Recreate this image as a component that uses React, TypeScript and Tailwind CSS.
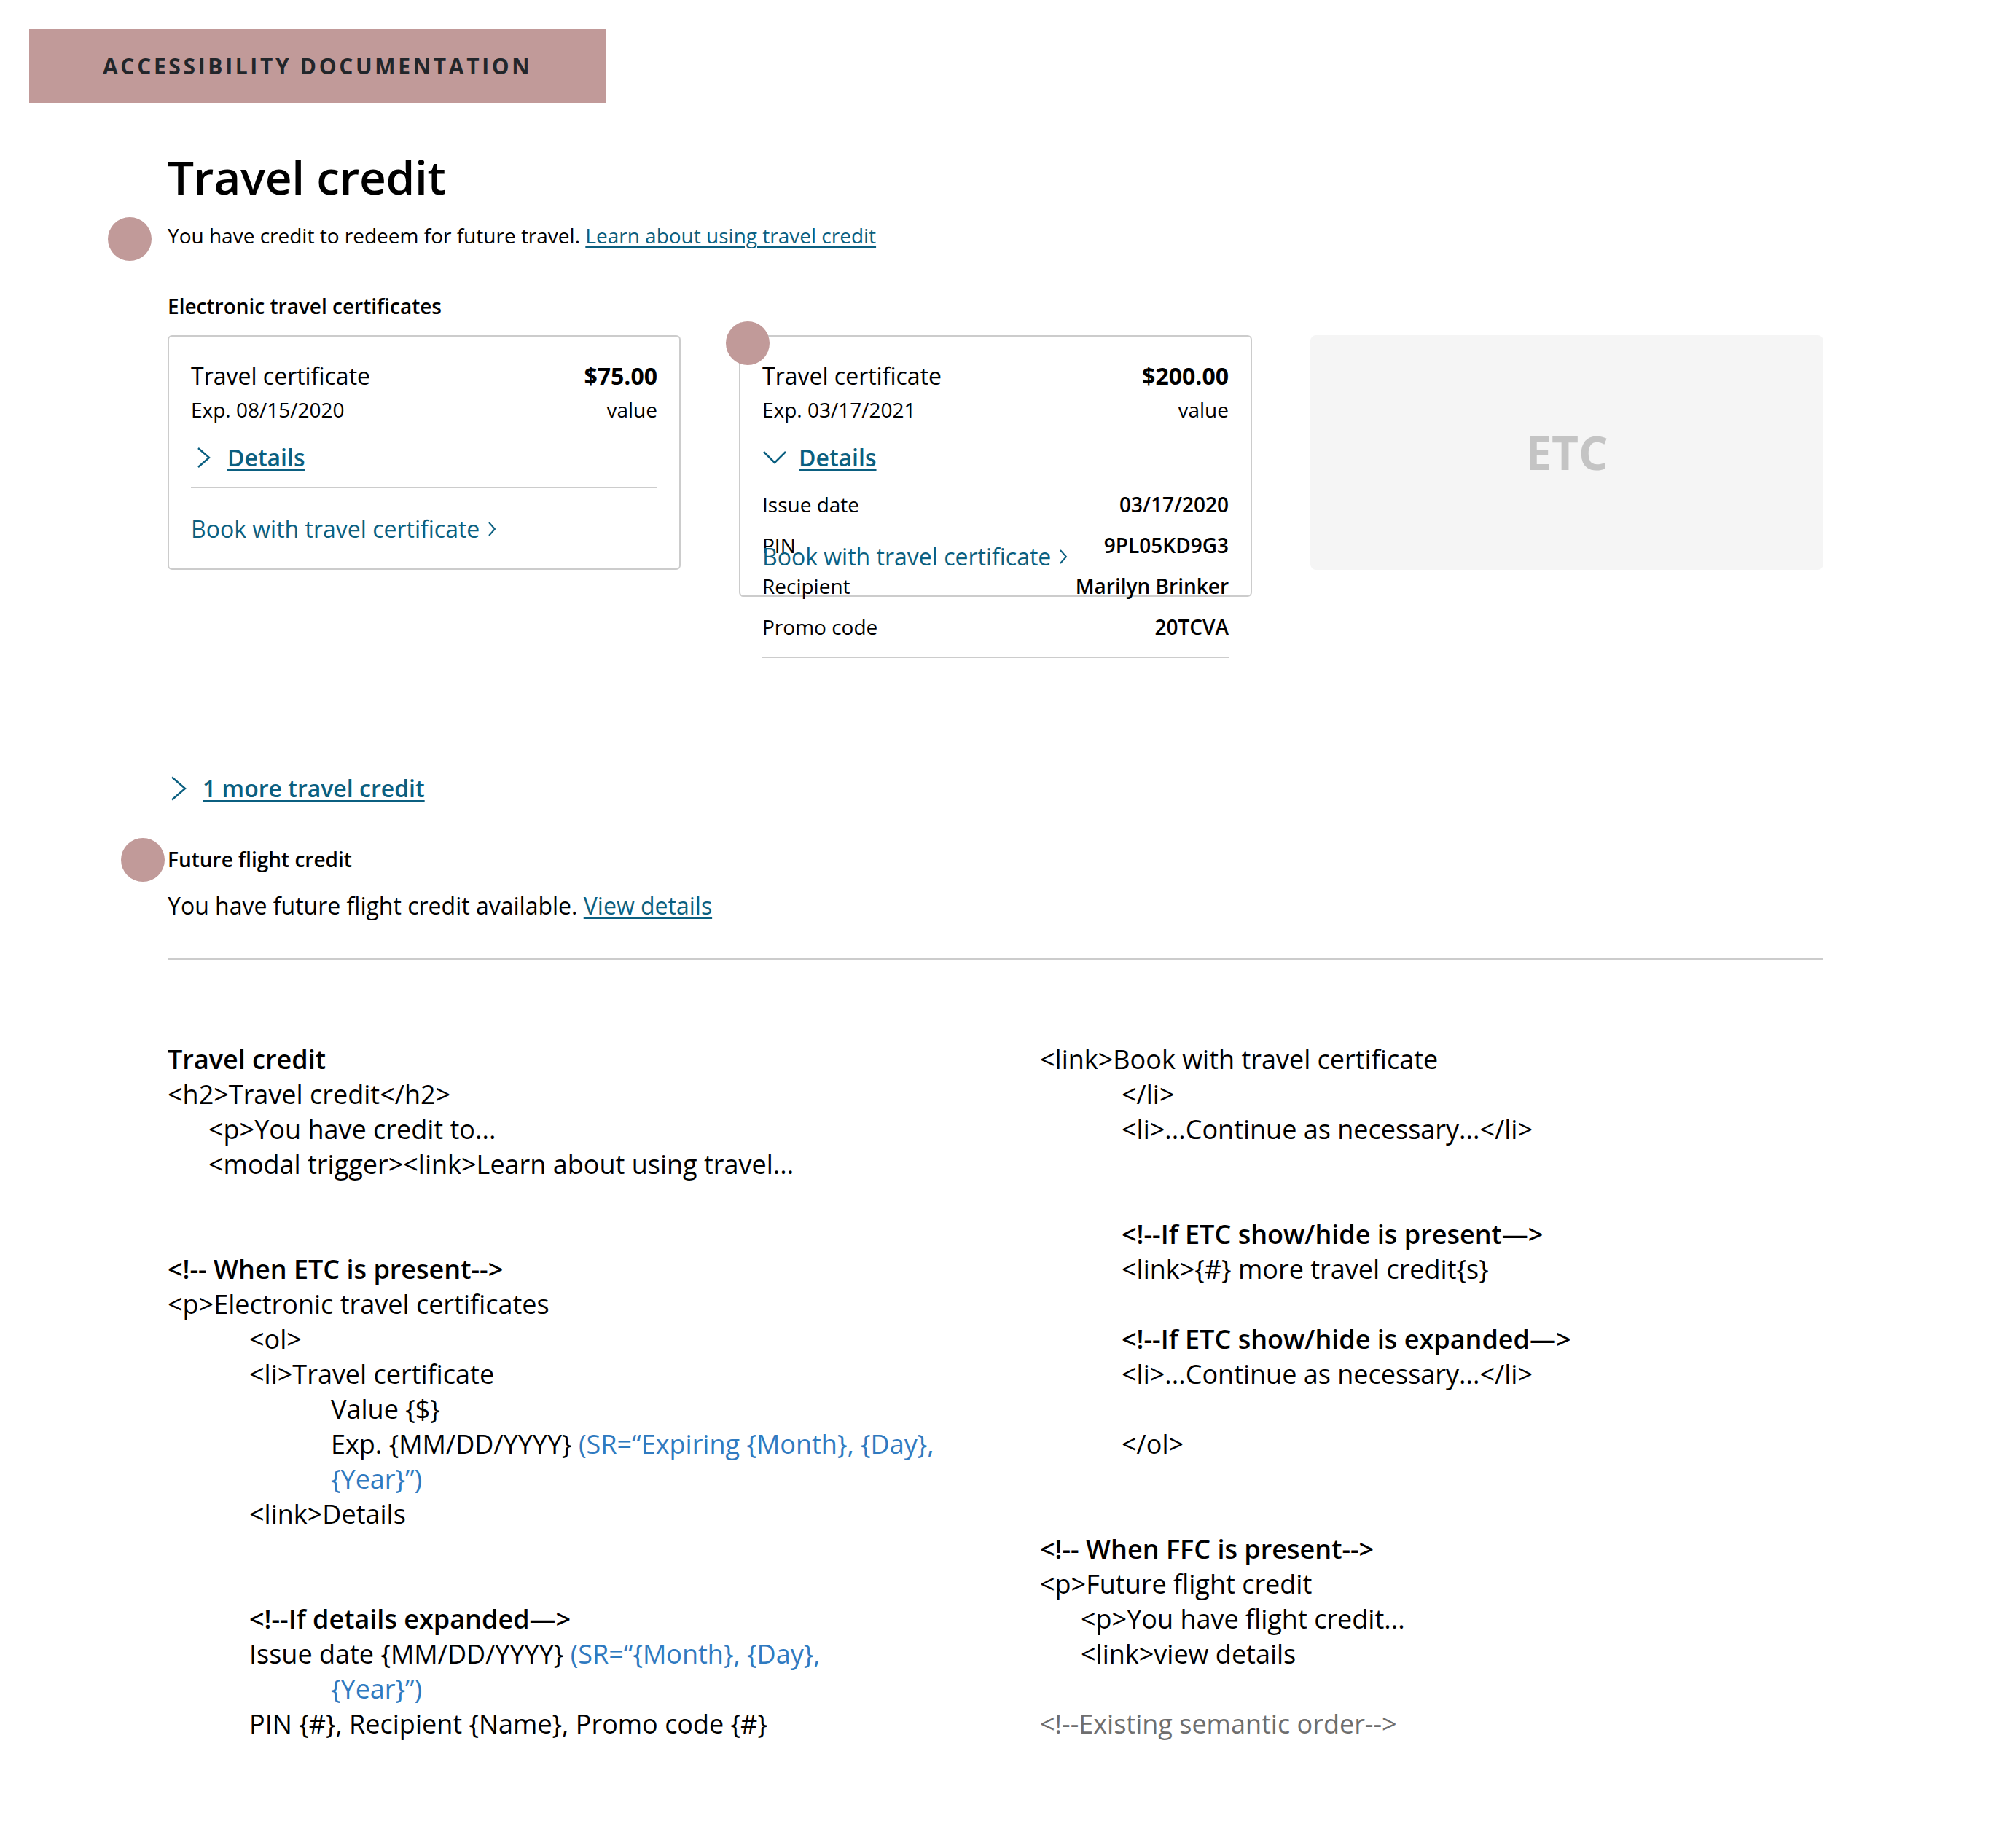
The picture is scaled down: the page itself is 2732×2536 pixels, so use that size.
import React from "react";

const LINK = "text-[#0b5f80]";

function ChevronRight() {
  return (
    <svg width="34" height="34" viewBox="0 0 34 34" className="shrink-0">
      <path d="M10 4 L25 17 L10 30" fill="none" stroke="currentColor" strokeWidth="2.5" />
    </svg>
  );
}

function ChevronDown() {
  return (
    <svg width="34" height="34" viewBox="0 0 34 34" className="shrink-0">
      <path d="M2 9 L17 24 L32 9" fill="none" stroke="currentColor" strokeWidth="2.5" />
    </svg>
  );
}

function SmallChevron() {
  return (
    <svg width="14" height="24" viewBox="0 0 14 24" className="ml-[10px] shrink-0">
      <path d="M3 3 L11 12 L3 21" fill="none" stroke="currentColor" strokeWidth="2" />
    </svg>
  );
}

function Marker({ className }: { className: string }) {
  return <span className={`absolute w-[60px] h-[60px] rounded-full bg-[#c19a99] ${className}`} />;
}

type Seg = { t: string; c?: "blue" | "gray" };
type Line = { s: Seg[]; i?: 0 | 1 | 2 | 4; b?: boolean };

const indentClass: Record<number, string> = {
  0: "pl-0",
  1: "pl-[56px]",
  2: "pl-[112px]",
  4: "pl-[224px]",
};

const L = (t: string, i: 0 | 1 | 2 | 4 = 0, b = false): Line => ({ s: [{ t }], i, b });
const E: Line = { s: [{ t: "" }] };

const leftLines: Line[] = [
  L("Travel credit", 0, true),
  L("<h2>Travel credit</h2>"),
  L("<p>You have credit to...", 1),
  L("<modal trigger><link>Learn about using travel...", 1),
  E,
  E,
  L("<!-- When ETC is present-->", 0, true),
  L("<p>Electronic travel certificates"),
  L("<ol>", 2),
  L("<li>Travel certificate", 2),
  L("Value {$}", 4),
  { s: [{ t: "Exp. {MM/DD/YYYY} " }, { t: "(SR=\u201cExpiring {Month}, {Day},", c: "blue" }], i: 4 },
  { s: [{ t: "{Year}\u201d)", c: "blue" }], i: 4 },
  L("<link>Details", 2),
  E,
  E,
  L("<!--If details expanded\u2014>", 2, true),
  { s: [{ t: "Issue date {MM/DD/YYYY} " }, { t: "(SR=\u201c{Month}, {Day},", c: "blue" }], i: 2 },
  { s: [{ t: "{Year}\u201d)", c: "blue" }], i: 4 },
  L("PIN {#}, Recipient {Name}, Promo code {#}", 2),
];

const rightLines: Line[] = [
  L("<link>Book with travel certificate"),
  L("</li>", 2),
  L("<li>...Continue as necessary...</li>", 2),
  E,
  E,
  L("<!--If ETC show/hide is present\u2014>", 2, true),
  L("<link>{#} more travel credit{s}", 2),
  E,
  L("<!--If ETC show/hide is expanded\u2014>", 2, true),
  L("<li>...Continue as necessary...</li>", 2),
  E,
  L("</ol>", 2),
  E,
  E,
  L("<!-- When FFC is present-->", 0, true),
  L("<p>Future flight credit"),
  L("<p>You have flight credit...", 1),
  L("<link>view details", 1),
  E,
  { s: [{ t: "<!--Existing semantic order-->", c: "gray" }] },
];

function CodeColumn({ lines }: { lines: Line[] }) {
  return (
    <div>
      {lines.map((l, k) => (
        <div
          key={k}
          className={`h-[48px] leading-[48px] whitespace-pre ${indentClass[l.i ?? 0]} ${l.b ? "font-semibold" : "font-normal"}`}
        >
          {l.s.map((s, j) => (
            <span
              key={j}
              className={s.c === "blue" ? "text-[#2f7ac0]" : s.c === "gray" ? "text-[#6e6e6e]" : "text-black"}
            >
              {s.t}
            </span>
          ))}
        </div>
      ))}
    </div>
  );
}

function CardHeader({ amount, exp }: { amount: string; exp: string }) {
  return (
    <>
      <div className="flex justify-between text-[32px] leading-[44px]">
        <span>Travel certificate</span>
        <span className="font-bold">{amount}</span>
      </div>
      <div className="mt-[4px] flex justify-between text-[28px] leading-[40px]">
        <span>{exp}</span>
        <span>value</span>
      </div>
    </>
  );
}

function DetailRow({ k, v }: { k: string; v: string }) {
  return (
    <div className="flex justify-between text-[28px] leading-[40px]">
      <span>{k}</span>
      <span className="font-semibold">{v}</span>
    </div>
  );
}

export default function App() {
  return (
    <div className="min-h-[2536px] w-[2732px] bg-white font-['Open_Sans',sans-serif] text-black pt-[40px] pb-[146px]">
      <div className="ml-[40px] w-[791px] h-[101px] bg-[#c19a99] flex items-center pl-[101px]">
        <span className="text-[30px] font-bold tracking-[0.122em] text-[#22262a] leading-none whitespace-nowrap">
          ACCESSIBILITY DOCUMENTATION
        </span>
      </div>

      <div className="px-[230px]">
        <h1 className="mt-[58px] text-[64px] leading-[88px] font-semibold tracking-[-0.005em]">Travel credit</h1>

        <p className="relative mt-[16px] text-[28px] leading-[40px]">
          <Marker className="-left-[82px] -top-[5px]" />
          You have credit to redeem for future travel.{" "}
          <a className={`${LINK} underline decoration-2 underline-offset-[4px]`}>Learn about using travel credit</a>
        </p>

        <p className="mt-[57px] text-[28px] leading-[40px] font-semibold">Electronic travel certificates</p>

        <div className="mt-[20px] flex gap-[80px] items-start">
          {/* Card 1 */}
          <div className="w-[704px] border-2 border-[#cccccc] rounded-[6px] pt-[32px] pb-[32px] px-[30px]">
            <CardHeader amount="$75.00" exp="Exp. 08/15/2020" />
            <div className={`mt-[24px] h-[44px] flex items-center gap-[16px] ${LINK}`}>
              <ChevronRight />
              <span className="text-[32px] leading-[44px] font-semibold underline decoration-2 underline-offset-[4px]">
                Details
              </span>
            </div>
            <div className="mt-[18px] h-[2px] bg-[#cccccc]" />
            <div className={`mt-[34px] h-[44px] flex items-center text-[32px] leading-[44px] ${LINK}`}>
              <span>Book with travel certificate</span>
              <SmallChevron />
            </div>
          </div>

          {/* Card 2 */}
          <div className="relative w-[704px] h-[359px] border-2 border-[#cccccc] rounded-[6px] pt-[32px] px-[30px]">
            <Marker className="-left-[20px] -top-[21px]" />
            <CardHeader amount="$200.00" exp="Exp. 03/17/2021" />
            <div className={`mt-[24px] h-[44px] flex items-center gap-[16px] ${LINK}`}>
              <ChevronDown />
              <span className="text-[32px] leading-[44px] font-semibold underline decoration-2 underline-offset-[4px]">
                Details
              </span>
            </div>
            <div className="mt-[22px] flex flex-col gap-[16px]">
              <DetailRow k="Issue date" v="03/17/2020" />
              <DetailRow k="PIN" v="9PL05KD9G3" />
              <DetailRow k="Recipient" v="Marilyn Brinker" />
              <DetailRow k="Promo code" v="20TCVA" />
            </div>
            <div className="mt-[21px] h-[2px] bg-[#cccccc]" />
            <div
              className={`absolute left-[30px] bottom-[31px] h-[44px] flex items-center text-[32px] leading-[44px] ${LINK}`}
            >
              <span>Book with travel certificate</span>
              <SmallChevron />
            </div>
          </div>

          {/* ETC placeholder */}
          <div className="w-[704px] h-[322px] rounded-[8px] bg-[#f5f5f5] flex items-center justify-center">
            <span className="text-[64px] font-bold text-[#c4c4c4] leading-none">ETC</span>
          </div>
        </div>

        <div className={`mt-[241px] h-[44px] flex items-center gap-[18px] ${LINK}`}>
          <svg width="30" height="44" viewBox="0 0 30 44" className="shrink-0">
            <path d="M6 6.5 L24 22 L6 37.5" fill="none" stroke="currentColor" strokeWidth="2.5" />
          </svg>
          <span className="text-[32px] leading-[44px] font-semibold underline decoration-2 underline-offset-[4px]">
            1 more travel credit
          </span>
        </div>

        <p className="relative mt-[55px] text-[28px] leading-[40px] font-semibold">
          <Marker className="-left-[64px] -top-[9px]" />
          Future flight credit
        </p>

        <p className="mt-[22px] text-[32px] leading-[44px]">
          You have future flight credit available.{" "}
          <a className={`${LINK} underline decoration-2 underline-offset-[4px]`}>View details</a>
        </p>

        <div className="mt-[50px] h-[2px] bg-[#cccccc]" />

        <div className="mt-[113px] grid grid-cols-[1197px_1fr] text-[36px]">
          <CodeColumn lines={leftLines} />
          <CodeColumn lines={rightLines} />
        </div>
      </div>
    </div>
  );
}
